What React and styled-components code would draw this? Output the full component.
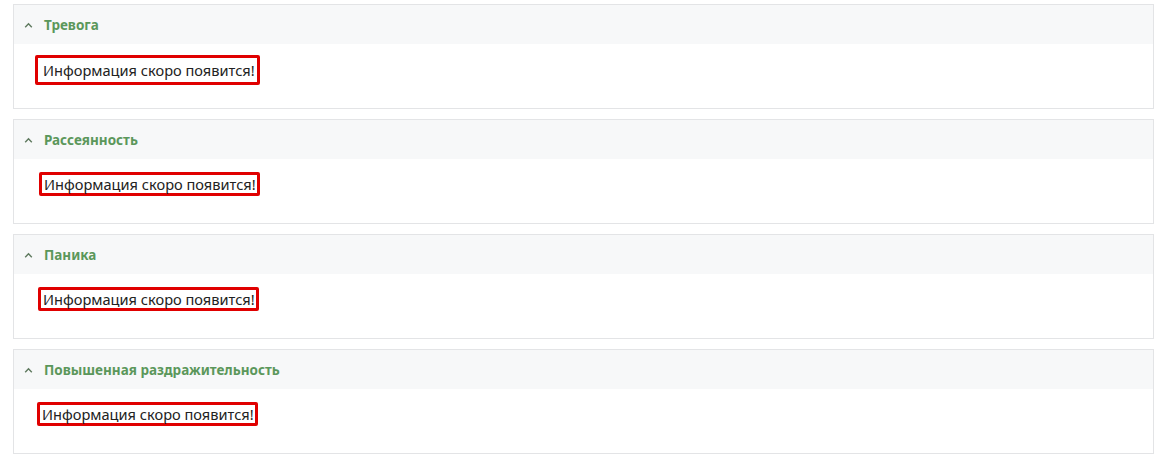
import React from 'react';
import styled, { createGlobalStyle } from 'styled-components';

const GlobalStyle = createGlobalStyle`
    body {
        margin: 0;
        background: #fff;
        font-family: "Noto Sans", "Open Sans", sans-serif;
    }
`;

const List = styled.div`
    display: flex;
    flex-direction: column;
    gap: 10px;
    padding: 4px 10px 0 13px;
`;

const Card = styled.section`
    border: 1px solid #e3e4e6;
    background: #fff;
    height: 105px;
    box-sizing: border-box;
`;

const Header = styled.div`
    display: flex;
    align-items: center;
    height: 39px;
    padding: 1px 0 0 9px;
    box-sizing: border-box;
    background: #f7f8f9;
    gap: 10px;
`;

const Chevron = styled.svg`
    width: 11px;
    height: 11px;
    flex: none;
`;

const Title = styled.span`
    font-size: 13.5px;
    font-weight: 700;
    color: #5b975b;
`;

const Body = styled.div`
    padding: ${p => (p.$tight ? 13 : 11)}px 0 0 ${p => p.$indent}px;
`;

const Notice = styled.span`
    display: inline-block;
    border: 3px solid #e00000;
    border-radius: 2px;
    padding: ${p => (p.$tight ? '0 1px 0 2px' : '1px 2px 1px 5px')};
    font-size: 14.6px;
    line-height: ${p => (p.$tight ? 18 : 22)}px;
    color: #222;
`;

const items = [
    { title: 'Тревога', indent: 21, tight: false },
    { title: 'Рассеянность', indent: 25, tight: true },
    { title: 'Паника', indent: 24, tight: true },
    { title: 'Повышенная раздражительность', indent: 23, tight: true },
];

export default function App() {
    return (
        <>
            <GlobalStyle />
            <List>
                {items.map(item => (
                    <Card key={item.title}>
                        <Header>
                            <Chevron viewBox="0 0 10 10">
                                <path d="M2 6.5 L5 3.5 L8 6.5" fill="none" stroke="#5f7a5f" strokeWidth="1.3" />
                            </Chevron>
                            <Title>{item.title}</Title>
                        </Header>
                        <Body $indent={item.indent} $tight={item.tight}>
                            <Notice $tight={item.tight}>Информация скоро появится!</Notice>
                        </Body>
                    </Card>
                ))}
            </List>
        </>
    );
}
